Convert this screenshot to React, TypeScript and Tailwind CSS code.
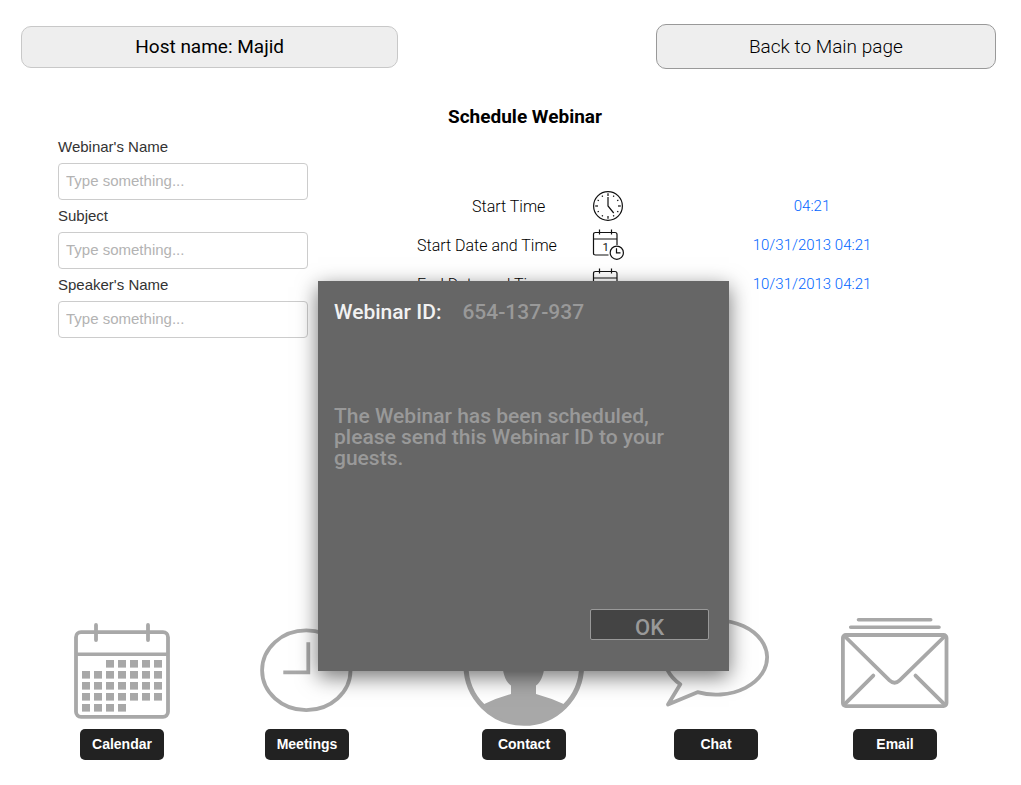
import type { ReactNode } from "react";

const fields = [
  { id: "webinar-name", label: "Webinar's Name" },
  { id: "subject", label: "Subject" },
  { id: "speaker-name", label: "Speaker's Name" },
];

function ClockIcon() {
  const ticks = Array.from({ length: 12 }, (_, i) => i * 30);
  return (
    <svg className="h-[33px] w-8" viewBox="0 0 32 33" fill="none" stroke="#111" strokeWidth="1.2" aria-hidden="true">
      <circle cx="16" cy="16" r="14.4" />
      {ticks.map((a) => (
        <path key={a} d={a % 90 === 0 ? "M16 3.2V6" : "M16 4V5.4"} transform={`rotate(${a} 16 16)`} />
      ))}
      <path d="M16 7V16L21.7 23" />
    </svg>
  );
}

function DateIcon() {
  return (
    <svg className="h-[33px] w-8" viewBox="0 0 32 33" fill="none" stroke="#111" strokeWidth="1.2" aria-hidden="true">
      <path d="M16.5 26H3.5Q1.5 26 1.5 24.5V5.5Q1.5 3.5 3.5 3.5H23Q25 3.5 25 5.5V16M1.5 10H25M7.5 0.6V5.6M19.5 0.6V5.6" />
      <circle cx="24.8" cy="23.7" r="6.6" />
      <path d="M24.5 19.3V23.8H28.5" />
      <text x="10.4" y="21.8" fontSize="11.5" fontWeight="400" fontFamily="Roboto, sans-serif" fill="#111" stroke="none">1</text>
    </svg>
  );
}

const times = [
  { label: "Start Time", value: "04:21", icon: <ClockIcon />, pad: "pl-[55px]" },
  { label: "Start Date and Time", value: "10/31/2013 04:21", icon: <DateIcon />, pad: "" },
  { label: "End Date and Time", value: "10/31/2013 04:21", icon: <DateIcon />, pad: "" },
];

function NavDrawing({ children }: { children: ReactNode }) {
  return (
    <svg
      className="h-[124px] w-[120px] overflow-visible"
      viewBox="0 0 120 124"
      fill="none"
      stroke="#a8a8a8"
      strokeWidth="3.8"
      aria-hidden="true"
    >
      {children}
    </svg>
  );
}

function CalendarDrawing() {
  const days: [number, number][] = [];
  for (let row = 0; row < 5; row++) {
    for (let col = 0; col < 7; col++) {
      if ((row === 0 && col < 2) || (row === 4 && col > 3)) continue;
      days.push([20 + col * 12, 55 + row * 11]);
    }
  }
  return (
    <NavDrawing>
      <rect x="14" y="27.2" width="92" height="84.6" rx="5" />
      <path d="M14 49.3H106" strokeWidth="3.4" />
      <path d="M34 20V35M86 20V35" strokeLinecap="round" />
      {days.map(([x, y]) => (
        <rect key={`${x}-${y}`} x={x} y={y} width="8" height="7.6" fill="#a8a8a8" stroke="none" />
      ))}
    </NavDrawing>
  );
}

function MeetingsDrawing() {
  return (
    <NavDrawing>
      <ellipse cx="59.3" cy="65.3" rx="44.2" ry="39.9" />
      <path d="M61.3 37.3V67.3H36.3" />
    </NavDrawing>
  );
}

function ContactDrawing() {
  return (
    <NavDrawing>
      <circle cx="59.8" cy="60.5" r="57.8" strokeWidth="5" />
      <path
        d="M60 23C46 23 39 34 39 50C37 62 40 76 47 80.5V89Q32 93 18 100Q36 119 60 119Q84 119 102 100Q87 93 72 89V80.5C79 76 82 62 80 50C80 34 74 23 60 23Z"
        fill="#a8a8a8"
        stroke="none"
      />
    </NavDrawing>
  );
}

function ChatDrawing() {
  return (
    <NavDrawing>
      <path d="M24.3 79.3A51.3 37.2 0 1 1 41.5 87.2L12 99.5Z" strokeLinejoin="round" />
    </NavDrawing>
  );
}

function EmailDrawing() {
  return (
    <NavDrawing>
      <rect x="7.9" y="30" width="103.6" height="71.1" rx="3" />
      <g strokeLinecap="round">
        <path d="M23.5 14.7H95.7M15.7 22.3H104" strokeWidth="3.6" />
        <path d="M9.5 31L54.5 75.3Q59.6 80 64.6 75.3L110 31" />
        <path d="M38.3 70.6L9 99.8M80.5 70.6L110 99.8" />
      </g>
    </NavDrawing>
  );
}

const sections = [
  { name: "Calendar", drawing: <CalendarDrawing /> },
  { name: "Meetings", drawing: <MeetingsDrawing /> },
  { name: "Contact", drawing: <ContactDrawing /> },
  { name: "Chat", drawing: <ChatDrawing /> },
  { name: "Email", drawing: <EmailDrawing /> },
];

function ScheduledDialog() {
  return (
    <div className="absolute inset-x-0 top-[281px] flex justify-center pl-[26px]">
      <div
        role="dialog"
        aria-labelledby="dialog-title"
        className="flex min-h-[390px] w-[411px] flex-col bg-[#666] pt-4 pr-5 pb-[31px] pl-4 text-[21px] font-medium text-[#999] shadow-[0_6px_20px_rgba(0,0,0,0.55)]"
      >
        <div className="flex gap-[21px] leading-[30px]">
          <h2 id="dialog-title" className="text-[#f2f2f2]">Webinar ID:</h2>
          <p>654-137-937</p>
        </div>
        <p className="mt-[79px] leading-[21px]">
          The Webinar has been scheduled, please send this Webinar ID to your guests.
        </p>
        <button type="button" className="mt-auto h-[31px] w-[119px] self-end rounded-xs border border-[#999] bg-[#444] pt-px text-[22px]">
          OK
        </button>
      </div>
    </div>
  );
}

export default function App() {
  return (
    <div className="relative flex min-h-screen flex-col bg-white font-['Roboto',sans-serif] text-black">
      <header className="flex items-center justify-between pt-6 pr-[25px] pl-[21px] text-[19px]">
        <div className="flex h-[42px] w-[38.7%] items-center justify-center rounded-[10px] border border-[#c8c8c8] bg-[#eee] pt-0.5">
          Host name: Majid
        </div>
        <button type="button" className="h-[45px] w-[34.9%] rounded-[10px] border border-[#999] bg-[#eee] pt-0.5 font-light">
          Back to Main page
        </button>
      </header>

      <main>
        <h1 className="mt-9 pl-[29px] text-center text-[19px] leading-6 font-bold">Schedule Webinar</h1>
        <div className="mt-0.5 flex pr-[21px] pl-[58px]">
          <form className="w-[250px] shrink-0 font-['Liberation_Sans',sans-serif] text-[15px] text-[#333]">
            {fields.map((f) => (
              <div key={f.id}>
                <label htmlFor={f.id} className="block leading-8">{f.label}</label>
                <input
                  id={f.id}
                  type="text"
                  placeholder="Type something..."
                  className="block h-[37px] w-full rounded-sm border border-[#ccc] px-[7px] pb-0.5 placeholder:text-[#b3b3b3]"
                />
              </div>
            ))}
          </form>
          <div className="ml-[109px] flex-1 pt-14">
            {times.map((t) => (
              <div key={t.label} className="grid h-[39px] grid-cols-[175px_32px_1fr] items-center font-light">
                <span className={t.pad}>{t.label}</span>
                {t.icon}
                <button type="button" aria-label={`${t.label} ${t.value}`} className="justify-self-center text-[15px] text-[#0066ff]">
                  {t.value}
                </button>
              </div>
            ))}
          </div>
        </div>
      </main>

      <nav className="mt-auto grid grid-cols-[170fr_200fr_234fr_150fr_208fr] pr-[22px] pb-[25px] pl-[37px]">
        {sections.map((s) => (
          <div key={s.name} className="flex flex-col items-center">
            {s.drawing}
            <button
              type="button"
              className="h-[31px] w-[84px] rounded-[5px] bg-[#222] pb-0.5 font-['Liberation_Sans',sans-serif] text-sm font-bold text-white"
            >
              {s.name}
            </button>
          </div>
        ))}
      </nav>

      <ScheduledDialog />
    </div>
  );
}
